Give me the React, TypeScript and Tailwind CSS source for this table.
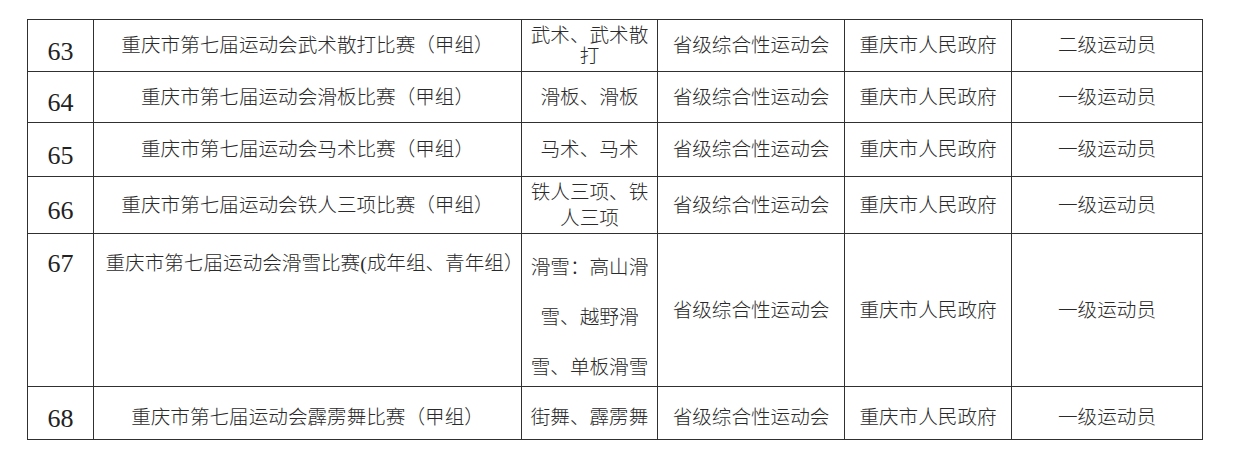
import clsx from 'clsx'

type Row = {
  no: string
  name: string
  item: string
  level: string
  org: string
  grade: string
  h: string
  itemLeading: string
  shift: string
  top?: boolean
}

const ROWS: Row[] = [
  {
    no: '63',
    name: '重庆市第七届运动会武术散打比赛（甲组）',
    item: '武术、武术散打',
    level: '省级综合性运动会',
    org: '重庆市人民政府',
    grade: '二级运动员',
    h: 'h-[52px]',
    itemLeading: 'leading-[21px]',
    shift: 'pt-[1px]'
  },
  {
    no: '64',
    name: '重庆市第七届运动会滑板比赛（甲组）',
    item: '滑板、滑板',
    level: '省级综合性运动会',
    org: '重庆市人民政府',
    grade: '一级运动员',
    h: 'h-[51px]',
    itemLeading: 'leading-[26px]',
    shift: 'pt-[1px]'
  },
  {
    no: '65',
    name: '重庆市第七届运动会马术比赛（甲组）',
    item: '马术、马术',
    level: '省级综合性运动会',
    org: '重庆市人民政府',
    grade: '一级运动员',
    h: 'h-[54px]',
    itemLeading: 'leading-[26px]',
    shift: 'pt-[1px]'
  },
  {
    no: '66',
    name: '重庆市第七届运动会铁人三项比赛（甲组）',
    item: '铁人三项、铁人三项',
    level: '省级综合性运动会',
    org: '重庆市人民政府',
    grade: '一级运动员',
    h: 'h-[57px]',
    itemLeading: 'leading-[26px]',
    shift: 'pt-[1px]'
  },
  {
    no: '67',
    name: '重庆市第七届运动会滑雪比赛(成年组、青年组）',
    item: '滑雪：高山滑雪、越野滑雪、单板滑雪',
    level: '省级综合性运动会',
    org: '重庆市人民政府',
    grade: '一级运动员',
    h: 'h-[153px]',
    itemLeading: 'leading-[50px]',
    shift: 'pt-[1px]',
    top: true
  },
  {
    no: '68',
    name: '重庆市第七届运动会霹雳舞比赛（甲组）',
    item: '街舞、霹雳舞',
    level: '省级综合性运动会',
    org: '重庆市人民政府',
    grade: '一级运动员',
    h: 'h-[53px]',
    itemLeading: 'leading-[26px]',
    shift: 'pt-[9px]'
  }
]

const cell = 'border-r border-b border-[#303030] flex justify-center text-center'
const zh = "font-['Liberation_Serif','Noto_Sans_CJK_SC',serif] font-light text-[19.6px] text-[#2a2a2a]"

export default function App() {
  return (
    <div className="w-[1233px] h-[462px] bg-white pt-[19px] pl-[27px]" lang="zh-CN">
      <div className="w-[1176px] border-l border-t border-[#303030] grid grid-cols-[66px_428px_136px_187px_167px_191px]">
        {ROWS.map((r) => (
          <div key={r.no} className="contents">
            <div
              className={clsx(
                cell,
                r.h,
                "font-['Liberation_Serif',serif] text-[26px] text-[#222] leading-[30px]",
                r.top ? 'items-start pt-[15px]' : 'items-center pt-3'
              )}
            >
              {r.no}
            </div>
            <div
              className={clsx(
                cell,
                r.h,
                zh,
                'leading-[28px] whitespace-nowrap',
                r.top ? 'items-start pt-[16px] pl-[14px]' : clsx('items-center', r.shift)
              )}
            >
              {r.name}
            </div>
            <div
              className={clsx(
                cell,
                r.h,
                zh,
                r.itemLeading,
                'px-[7px]',
                r.top ? 'items-start pt-[9px]' : clsx('items-center', r.shift)
              )}
            >
              <span>{r.item}</span>
            </div>
            <div className={clsx(cell, r.h, zh, 'items-center leading-[28px]', r.shift)}>{r.level}</div>
            <div className={clsx(cell, r.h, zh, 'items-center leading-[28px]', r.shift)}>{r.org}</div>
            <div className={clsx(cell, r.h, zh, 'items-center leading-[28px]', r.shift)}>{r.grade}</div>
          </div>
        ))}
      </div>
    </div>
  )
}
